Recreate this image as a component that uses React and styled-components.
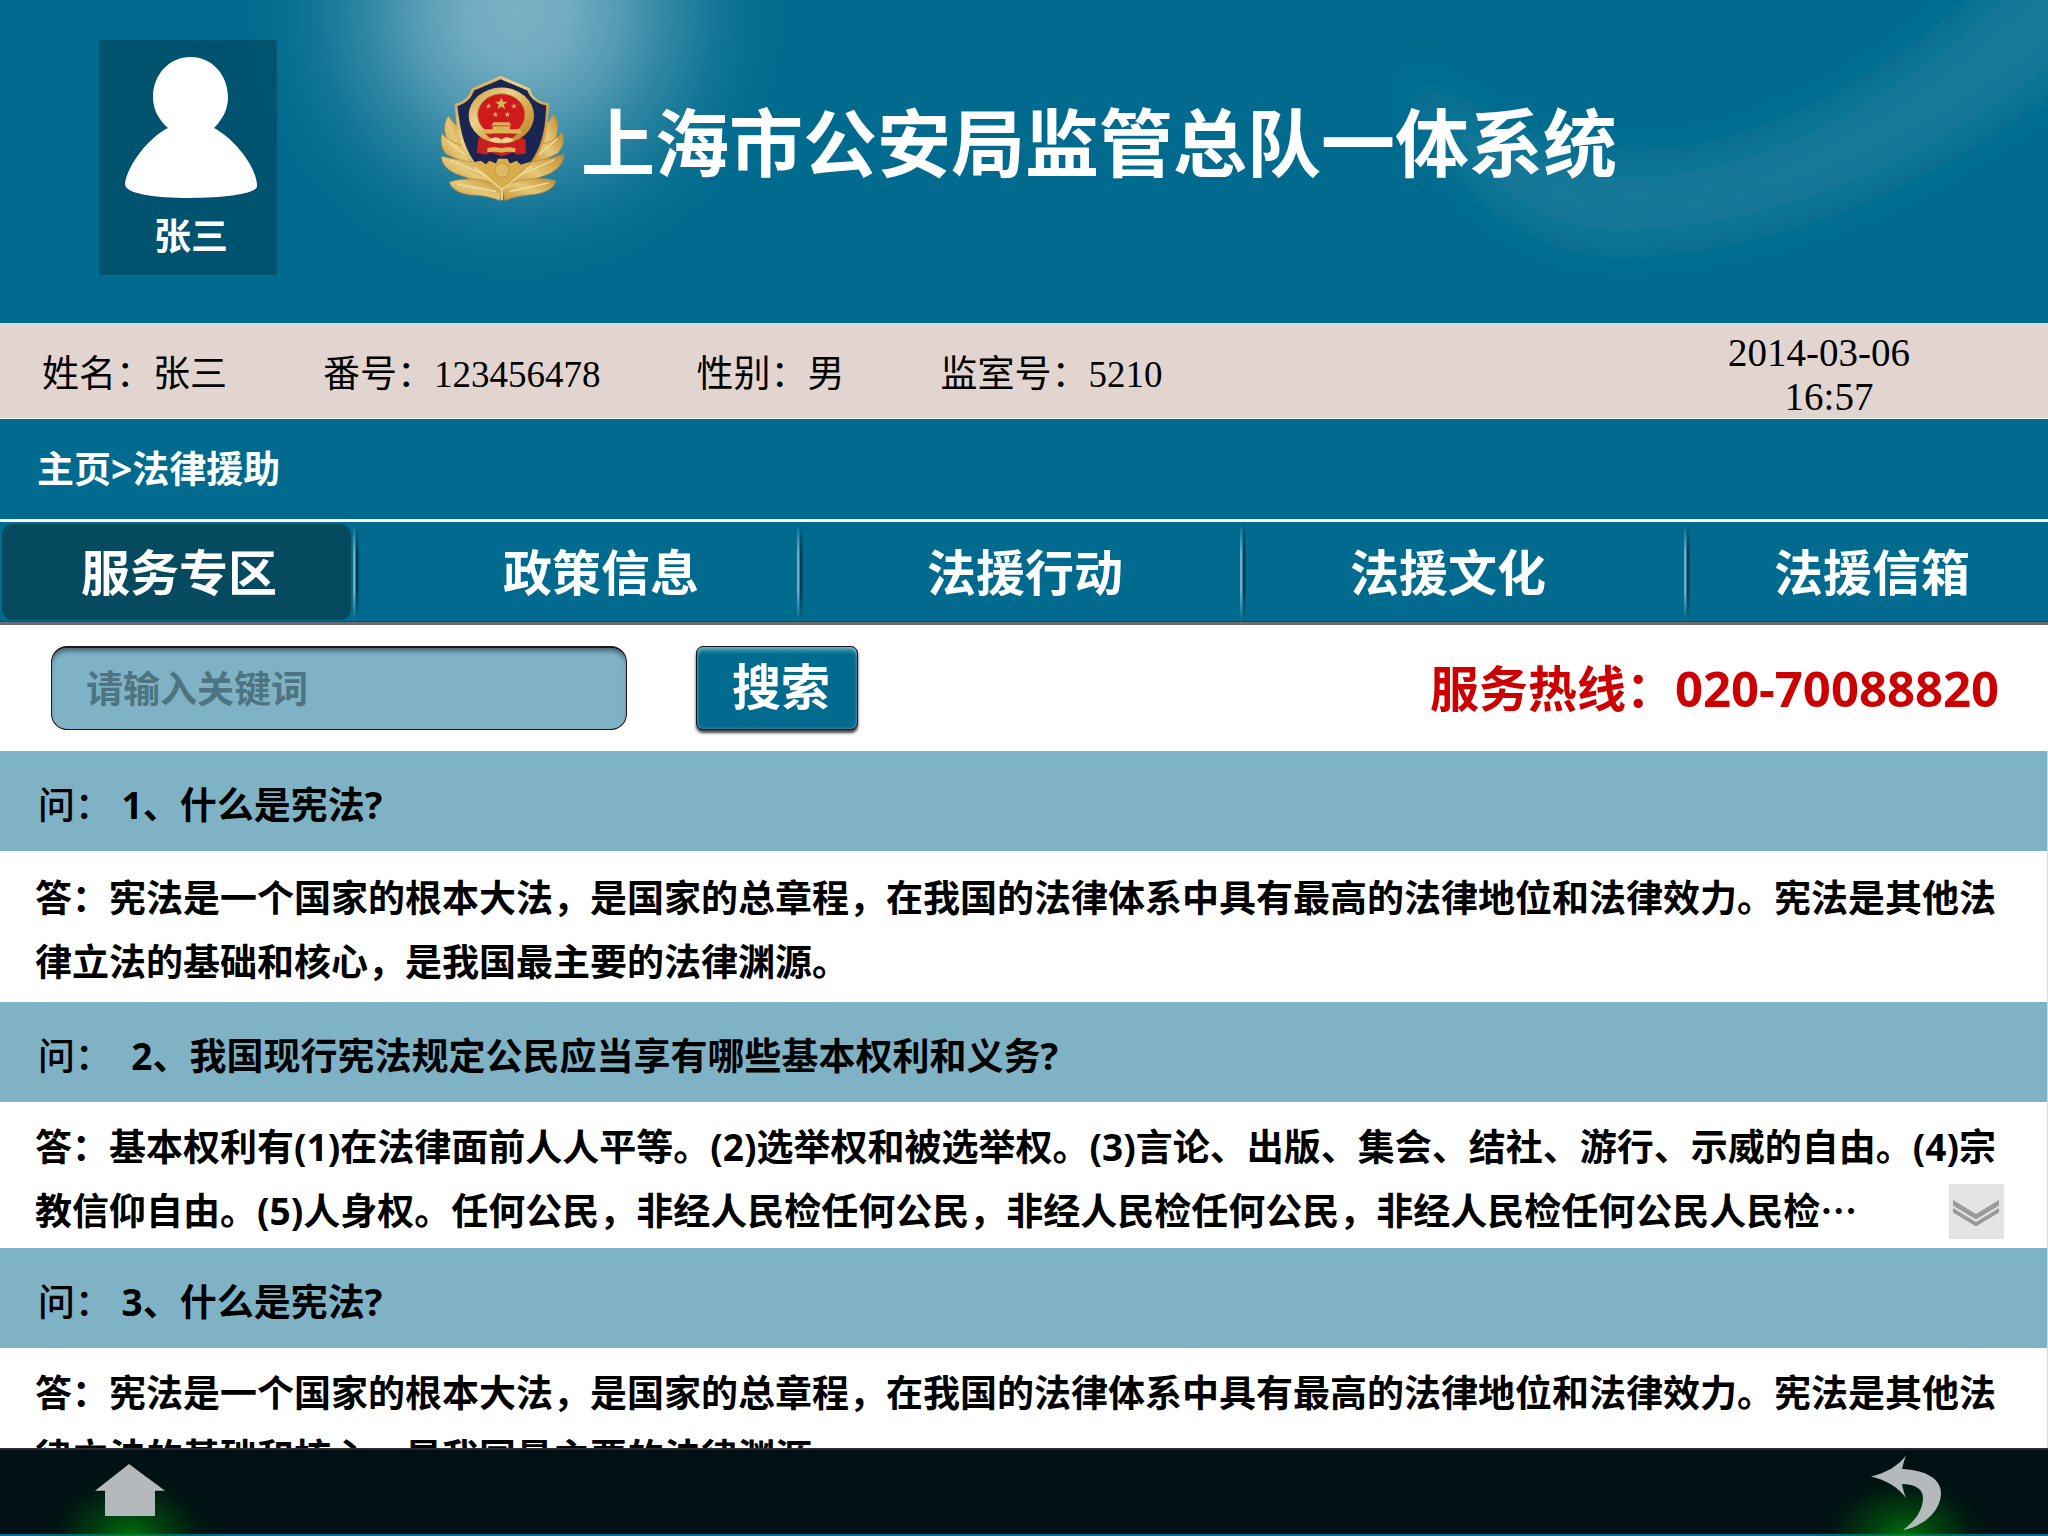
import React from "react";
import styled, { createGlobalStyle } from "styled-components";

const teal = "#006b8e";
const paleTeal = "#7fb2c4";
const blush = "#e2d5d0";
const sans = `"Open Sans", "Noto Sans CJK SC", sans-serif`;
const serif = `"Liberation Serif", "Noto Sans CJK SC", serif`;

const GlobalStyle = createGlobalStyle`
  *, *::before, *::after { box-sizing: border-box; }
  html, body, #root { height: 100%; margin: 0; }
  body { background: ${teal}; font-family: ${sans}; overflow: hidden; }
  button, input { font-family: inherit; }
  h1, h2, p, dl, dd { margin: 0; }
`;

const Page = styled.div`
  height: 100vh;
  display: flex;
  flex-direction: column;
  background: #fff;
  color: #000;
  font-size: 37px;
  line-height: 44px;
`;

const Header = styled.header`
  position: relative;
  flex: none;
  min-height: 323px;
  padding: 40px 99px;
  display: flex;
  align-items: flex-start;
  gap: 163px;
  overflow: hidden;
  background: ${teal};
`;

const Backdrop = styled.svg`
  position: absolute;
  inset: 0;
  width: 100%;
  height: 100%;
`;

const Profile = styled.div`
  position: relative;
  width: 178px;
  height: 235px;
  padding: 16px 0 0 6px;
  display: flex;
  flex-direction: column;
  align-items: center;
  gap: 16px;
  background: rgba(0, 55, 72, 0.45);
  color: #fff;
  font-weight: 700;
  white-space: nowrap;
`;

const Brand = styled.div`
  position: relative;
  margin-top: 35px;
  display: flex;
  align-items: center;
  gap: 16px;
`;

const Title = styled.h1`
  padding-top: 8px;
  color: #fff;
  font-size: 74px;
  line-height: 116px;
  font-weight: 700;
  white-space: nowrap;
`;

const InfoBar = styled.section`
  flex: none;
  display: flex;
  justify-content: space-between;
  height: 96px;
  padding: 8px 134px 0 42px;
  background: ${blush};
  border-bottom: 1px solid #fff;
  font-family: ${serif};
  white-space: nowrap;
`;

const Facts = styled.dl`
  display: flex;
  align-items: center;
  gap: 96px;
`;

const Fact = styled.div`
  display: flex;
`;

const Clock = styled.time`
  width: 190px;
  display: flex;
  flex-direction: column;
  align-items: center;
  font-size: 39px;
`;

const Hour = styled.span`
  padding-left: 20px;
`;

const Crumbs = styled.nav`
  flex: none;
  height: 100px;
  padding: 0 37px;
  display: flex;
  align-items: center;
  background: ${teal};
  color: #fff;
  font-weight: 700;
`;

const Crumb = styled.a`
  color: inherit;
  text-decoration: none;
`;

const Tabs = styled.nav`
  flex: none;
  height: 106px;
  display: grid;
  grid-template-columns: 356fr 444fr 443fr 444fr 361fr;
  background: ${teal};
  border-top: 3px solid #fff;
  border-bottom: 3px solid #6d6b70;
  box-shadow: inset 0 -1px 0 #2d4650;
`;

const Tab = styled.button`
  position: relative;
  z-index: 0;
  border: 0;
  padding: 0 0 0 ${(p) => p.$lead}px;
  background: none;
  color: #fff;
  font-size: 49px;
  line-height: 64px;
  font-weight: 700;
  text-align: left;
  white-space: nowrap;
  cursor: pointer;

  &[aria-current="page"]::before {
    content: "";
    position: absolute;
    z-index: -1;
    inset: 2px 5px 2px 2px;
    border-radius: 11px;
    background: #064a60;
  }

  &:not(:first-child)::after {
    content: "";
    position: absolute;
    inset: 2px auto 2px -3px;
    width: 6px;
    background: linear-gradient(90deg, #6fb0c6 0 2px, #2a7f9c 2px 3px, #003c50 3px 5px, #00546f 5px);
    mask-image: linear-gradient(transparent, #000 30%, #000 70%, transparent);
  }
`;

const SearchRow = styled.form`
  flex: none;
  height: 126px;
  padding: 0 49px 0 51px;
  display: flex;
  align-items: center;
  gap: 69px;
`;

const SearchBox = styled.input`
  width: 576px;
  height: 84px;
  padding: 0 34px;
  border: 1px solid #2a1216;
  border-top-width: 2px;
  border-radius: 16px;
  background: ${paleTeal};
  box-shadow: inset 0 5px 5px -2px rgba(20, 50, 65, 0.6);
  color: #10333f;
  font-size: 37px;
  font-weight: 700;
  outline: none;

  &::placeholder { color: #4d7480; opacity: 1; }
`;

const SearchButton = styled.button`
  width: 162px;
  height: 84px;
  padding: 0 0 4px 8px;
  border: 1px solid #1c1014;
  border-radius: 7px;
  background: ${teal};
  box-shadow: inset 0 5px 5px -2px rgba(160, 210, 225, 0.7), inset 0 0 3px rgba(160, 210, 225, 0.6), 0 3px 3px rgba(0, 0, 0, 0.75);
  color: #fff;
  font-size: 49px;
  line-height: 64px;
  font-weight: 700;
  cursor: pointer;
`;

const Hotline = styled.p`
  margin-left: auto;
  color: #cc0000;
  font-size: 49px;
  line-height: 64px;
  font-weight: 700;
  white-space: nowrap;
`;

const List = styled.main`
  flex: 1;
  min-height: 0;
  overflow: hidden;
  border-right: 1px solid ${blush};
`;

const Question = styled.h2`
  height: 100px;
  padding: 8px 38px 0;
  display: flex;
  align-items: center;
  background: ${paleTeal};
  font-size: 37px;
  font-weight: 700;
  white-space: pre;
`;

const Asker = styled.span`
  font-weight: 500;
`;

const Answer = styled.div`
  position: relative;
  padding: ${(p) => (p.$tight ? "13px 35px 5px" : "15px 35px 8px")};
  line-height: 64px;
  font-weight: 700;
  white-space: nowrap;
`;

const Ellipsis = styled.span`
  font-family: "Noto Sans CJK SC", sans-serif;
  line-height: 44px;
`;

const Expand = styled.button`
  position: absolute;
  right: 43px;
  bottom: 9px;
  width: 55px;
  height: 55px;
  padding: 0;
  border: 0;
  background: #e4e4e4;
  cursor: pointer;

  svg { display: block; }
`;

const Footer = styled.footer`
  flex: none;
  height: 88px;
  padding: 0 106px 0 93px;
  display: flex;
  justify-content: space-between;
  border-top: 2px solid #262a2c;
  border-bottom: 2px solid ${teal};
  background: #001014;
`;

const FootButton = styled.button`
  position: relative;
  width: 74px;
  padding: 0;
  border: 0;
  background: none;
  cursor: pointer;

  &::before {
    content: "";
    position: absolute;
    inset: 10px -60px -2px;
    background: radial-gradient(ellipse 94px 68px at 50% 100%, rgba(0, 140, 10, 0.75), rgba(0, 110, 8, 0.45) 40%, rgba(0, 60, 8, 0.15) 75%, transparent);
  }

  svg { position: relative; display: block; }
`;

function HeaderBackdrop() {
  return (
    <Backdrop viewBox="0 0 2048 323" preserveAspectRatio="xMidYMin slice" aria-hidden="true">
      <defs>
        <radialGradient id="glow" gradientUnits="userSpaceOnUse" cx="517" cy="12" r="275">
          <stop offset="0" stopColor="#7ab0c4" />
          <stop offset="0.19" stopColor="#7ab0c4" stopOpacity="0.93" />
          <stop offset="0.37" stopColor="#7ab0c4" stopOpacity="0.7" />
          <stop offset="0.56" stopColor="#7ab0c4" stopOpacity="0.38" />
          <stop offset="0.74" stopColor="#7ab0c4" stopOpacity="0.14" />
          <stop offset="0.88" stopColor="#7ab0c4" stopOpacity="0.03" />
          <stop offset="1" stopColor="#7ab0c4" stopOpacity="0" />
        </radialGradient>
        <filter id="soft" x="-20%" y="-40%" width="140%" height="180%">
          <feGaussianBlur stdDeviation="20" />
        </filter>
      </defs>
      <rect width="1000" height="323" fill="url(#glow)" />
      <path
        d="M1410 80 C1450 180 1530 246 1625 244 C1780 240 1960 170 2120 20 L2040 -50 C1930 60 1790 158 1640 164 C1550 164 1490 130 1410 80 Z"
        fill="#197998"
        filter="url(#soft)"
      />
    </Backdrop>
  );
}

function Avatar() {
  return (
    <svg width="134" height="142" viewBox="124 56 134 142" aria-hidden="true">
      <path
        fill="#fff"
        d="M190.500 57 C212 57 228 75 228 97 C228 110 222 120 214 128 C236 140 257 168 257 186 C257 194 225 198 190 198 C155 198 125 194 125 184 C127 166 148 138 168 128 C159 120 153 110 153 97 C153 75 169 57 190.500 57 Z"
      />
    </svg>
  );
}

const star = (cx, cy, r) =>
  Array.from({ length: 10 }, (_, i) => {
    const a = (Math.PI * i) / 5 - Math.PI / 2;
    const d = i % 2 ? r * 0.4 : r;
    return `${(cx + d * Math.cos(a)).toFixed(1)},${(cy + d * Math.sin(a)).toFixed(1)}`;
  }).join(" ");

function Emblem() {
  return (
    <svg width="125" height="127" viewBox="60 45 375 380" role="img" aria-label="警徽">
      <defs>
        <linearGradient id="gold" x1="0" y1="0" x2="1" y2="1">
          <stop offset="0" stopColor="#c9953a" />
          <stop offset="0.35" stopColor="#ecd28c" />
          <stop offset="0.65" stopColor="#d2a548" />
          <stop offset="1" stopColor="#b9822a" />
        </linearGradient>
        <linearGradient id="leaf" x1="1" y1="0" x2="0" y2="1">
          <stop offset="0" stopColor="#bf8a2c" />
          <stop offset="0.5" stopColor="#e6c878" />
          <stop offset="1" stopColor="#c8943a" />
        </linearGradient>
      </defs>
      <g fill="url(#leaf)" stroke="#b98a38" strokeWidth="2">
        <path d="M86 168 C70 185 72 215 80 235 L130 300 L120 200 C105 195 95 182 86 168 Z" />
        <path d="M400 162 C418 180 414 212 408 235 L355 300 L368 200 C384 190 392 176 400 162 Z" />
        <path d="M66 220 C60 245 64 268 82 284 L160 318 L128 255 C105 250 80 240 66 220 Z" />
        <path d="M426 216 C436 240 428 264 412 280 L330 318 L362 252 C388 248 412 238 426 216 Z" />
        <path d="M64 288 C66 316 86 332 112 342 L240 388 L196 318 C150 300 105 300 64 288 Z" />
        <path d="M432 282 C430 312 410 330 384 342 L256 388 L300 318 C344 298 394 298 432 282 Z" />
        <path d="M88 366 C96 392 130 404 165 405 C195 406 222 414 240 421 L246 384 C200 350 130 352 88 366 Z" />
        <path d="M408 362 C400 390 364 402 330 404 C300 406 274 414 254 421 L248 384 C294 352 366 350 408 362 Z" />
      </g>
      <path d="M242 47 L330 84 C334 106 352 126 387 129 C384 190 380 250 340 304 L246 385 L154 304 C112 250 108 190 104 131 C140 122 148 104 156 84 Z" fill="url(#gold)" />
      <path d="M242 57 L322 91 C330 112 346 129 379 136 C376 190 372 250 332 306 L300 322 L200 322 L164 306 C124 250 120 190 112 138 C142 128 154 112 162 91 Z" fill="#1a2552" />
      <path d="M160 306 L182 302 L198 312 L208 302 L228 310 L234 296 L262 296 L270 310 L290 302 L302 314 L334 304 L246 384 Z" fill="#d9ad4b" />
      <circle cx="246" cy="330" r="22" fill="#dfb95f" stroke="#c4963f" strokeWidth="3" />
      <path d="M164 322 L246 388 L332 320 M246 388 V420" stroke="#ecd28c" strokeWidth="6" fill="none" />
      <path d="M110 372 L228 394 M386 368 L270 394 M92 300 L200 346 M404 298 L298 346 M82 240 L136 284 M412 236 L356 284" stroke="#f1dfa8" strokeWidth="4" fill="none" />
      <path d="M176 232 L200 228 L296 228 L316 238 L318 280 L290 284 L282 276 L246 288 L208 276 L198 284 L170 278 Z" fill="#c8201f" />
      <ellipse cx="244" cy="166" rx="98" ry="84" fill="url(#gold)" />
      <ellipse cx="244" cy="164" rx="71" ry="63" fill="#cf1a1c" stroke="#b98a38" strokeWidth="3" />
      <g fill="#dcb656">
        <polygon points={star(244, 131, 20)} />
        <polygon points={star(206, 138, 9)} />
        <polygon points={star(282, 138, 9)} />
        <polygon points={star(226, 163, 9)} />
        <polygon points={star(262, 163, 9)} />
        <path d="M220 186 H268 L274 196 H214 Z M218 198 H270 V207 H300 L306 220 H182 L188 207 H218 Z" />
        <path d="M202 264 Q224 258 244 264 Q264 258 286 264 V276 Q264 272 244 278 Q224 272 202 276 Z" />
      </g>
      <path d="M196 221 H292 Q276 240 244 244 Q212 240 196 221 Z" fill="#c8201f" />
      <path d="M206 240 Q226 224 244 238 Q262 224 282 240 Q262 252 244 246 Q226 252 206 240 Z" fill="#ecd28c" />
    </svg>
  );
}

const facts = [
  ["姓名：", "张三"],
  ["番号：", "123456478"],
  ["性别：", "男"],
  ["监室号：", "5210"],
];

const tabs = [
  { label: "服务专区", lead: 81 },
  { label: "政策信息", lead: 147 },
  { label: "法援行动", lead: 127 },
  { label: "法援文化", lead: 107 },
  { label: "法援信箱", lead: 87 },
];

const constitution = [
  "答：宪法是一个国家的根本大法，是国家的总章程，在我国的法律体系中具有最高的法律地位和法律效力。宪法是其他法",
  "律立法的基础和核心，是我国最主要的法律渊源。",
];

const entries = [
  { question: " 1、什么是宪法?", answer: constitution },
  {
    question: "  2、我国现行宪法规定公民应当享有哪些基本权利和义务?",
    answer: [
      "答：基本权利有(1)在法律面前人人平等。(2)选举权和被选举权。(3)言论、出版、集会、结社、游行、示威的自由。(4)宗",
      "教信仰自由。(5)人身权。任何公民，非经人民检任何公民，非经人民检任何公民，非经人民检任何公民人民检",
    ],
    folded: true,
    tight: true,
  },
  { question: " 3、什么是宪法?", answer: constitution, tight: true },
];

export default function App() {
  return (
    <Page>
      <GlobalStyle />
      <Header>
        <HeaderBackdrop />
        <Profile>
          <Avatar />
          <span>张三</span>
        </Profile>
        <Brand>
          <Emblem />
          <Title>上海市公安局监管总队一体系统</Title>
        </Brand>
      </Header>

      <InfoBar>
        <Facts>
          {facts.map(([name, value]) => (
            <Fact key={name}>
              <dt>{name}</dt>
              <dd>{value}</dd>
            </Fact>
          ))}
        </Facts>
        <Clock dateTime="2014-03-06T16:57">
          <span>2014-03-06</span>
          <Hour>16:57</Hour>
        </Clock>
      </InfoBar>

      <Crumbs aria-label="位置">
        <Crumb href="#home">主页</Crumb>
        <span>&gt;</span>
        <Crumb href="#aid">法律援助</Crumb>
      </Crumbs>

      <Tabs aria-label="栏目">
        {tabs.map((tab, i) => (
          <Tab key={tab.label} type="button" $lead={tab.lead} aria-current={i === 0 ? "page" : undefined}>
            {tab.label}
          </Tab>
        ))}
      </Tabs>

      <SearchRow role="search" onSubmit={(e) => e.preventDefault()}>
        <SearchBox type="text" aria-label="请输入关键词" placeholder="请输入关键词" />
        <SearchButton type="submit">搜索</SearchButton>
        <Hotline>服务热线：020-70088820</Hotline>
      </SearchRow>

      <List>
        {entries.map((entry) => (
          <article key={entry.question}>
            <Question>
              <Asker>问：</Asker>
              <span>{entry.question}</span>
            </Question>
            <Answer $tight={entry.tight}>
              {entry.answer.map((line, i) => (
                <p key={line}>
                  {line}
                  {entry.folded && i === 1 && <Ellipsis>…</Ellipsis>}
                </p>
              ))}
              {entry.folded && (
                <Expand type="button" aria-label="展开">
                  <svg width="55" height="55" viewBox="0 0 55 55" aria-hidden="true">
                    <path fill="#9a9a9a" d="M4 16 L27 30 L50 16 V21.500 L27 35.500 L4 21.500 Z M4 24 L27 38 L50 24 V28.500 L27 42.500 L4 28.500 Z" />
                  </svg>
                </Expand>
              )}
            </Answer>
          </article>
        ))}
      </List>

      <Footer>
        <FootButton type="button" aria-label="主页">
          <svg width="74" height="84" viewBox="93 1450 74 84" aria-hidden="true">
            <path fill="#b4b9bb" d="M129 1464 L165 1490.700 H155 V1516 H105 V1490.700 H95 Z" />
          </svg>
        </FootButton>
        <FootButton type="button" aria-label="返回">
          <svg width="74" height="84" viewBox="1868 1450 74 84" aria-hidden="true">
            <path
              fill="#b4b9bb"
              d="M1871 1476.500 C1886 1473 1898 1466 1906 1455.500 C1904 1461 1903 1465 1902 1469 C1926 1470 1941 1479 1941 1493 C1941 1509 1926 1526 1903 1530 C1917 1520 1923 1508 1923 1498 C1923 1489 1915 1484 1902 1484 C1903 1489 1904 1493 1906 1498 C1898 1487 1886 1480 1871 1476.500 Z"
            />
          </svg>
        </FootButton>
      </Footer>
    </Page>
  );
}
